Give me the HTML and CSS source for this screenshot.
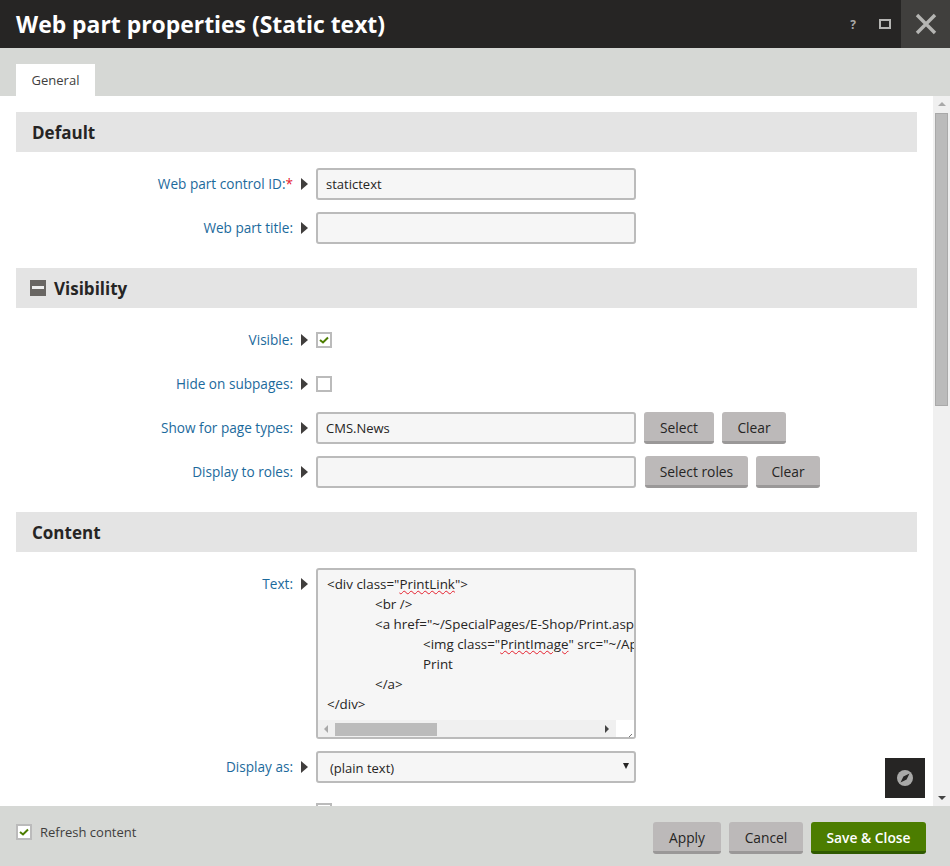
FILE: index.html
```html
<!DOCTYPE html>
<html lang="en">
<head>
    <meta charset="UTF-8">
    <meta name="viewport" content="width=device-width, initial-scale=1.0">
    <title>Web part properties (Static text)</title>
    <link rel="stylesheet" href="styles.css">
</head>
<body>
    <header class="titlebar">
        <h1>Web part properties (Static text)</h1>
        <div class="title-actions">
            <span class="help">?</span>
            <span class="maximize"></span>
            <span class="close">
                <svg width="22" height="22" viewBox="0 0 22 22"><path d="M2 2L20 20M20 2L2 20" stroke="#b5b5b3" stroke-width="3.4" fill="none"/></svg>
            </span>
        </div>
    </header>

    <nav class="tabs">
        <a class="tab">General</a>
    </nav>

    <main class="content">
        <div class="form">
            <section>
                <h2 class="section-head">Default</h2>
                <div class="row">
                    <label>Web part control ID:<span class="req">*</span></label>
                    <span class="arrow"></span>
                    <div class="input">statictext</div>
                </div>
                <div class="row">
                    <label>Web part title:</label>
                    <span class="arrow"></span>
                    <div class="input"></div>
                </div>
            </section>

            <section>
                <h2 class="section-head">
                    <span class="collapse"></span>
                    Visibility
                </h2>
                <div class="row">
                    <label>Visible:</label>
                    <span class="arrow"></span>
                    <span class="check checked">
                        <svg width="12" height="12" viewBox="0 0 12 12"><path d="M2 6L5 8.5L10 3.5" stroke="#4c7d00" stroke-width="2" fill="none"/></svg>
                    </span>
                </div>
                <div class="row">
                    <label>Hide on subpages:</label>
                    <span class="arrow"></span>
                    <span class="check"></span>
                </div>
                <div class="row">
                    <label>Show for page types:</label>
                    <span class="arrow"></span>
                    <div class="input">CMS.News</div>
                    <button class="btn btn-select">Select</button>
                    <button class="btn btn-clear">Clear</button>
                </div>
                <div class="row">
                    <label>Display to roles:</label>
                    <span class="arrow"></span>
                    <div class="input">&nbsp;</div>
                    <button class="btn btn-roles">Select roles</button>
                    <button class="btn btn-clear">Clear</button>
                </div>
            </section>

            <section>
                <h2 class="section-head">Content</h2>
                <div class="row row-text">
                    <label>Text:</label>
                    <span class="arrow"></span>
                    <div class="editor">
                        <pre class="code">&lt;div class="<span class="typo">PrintLink</span>"&gt;
	&lt;br /&gt;
	&lt;a href="~/SpecialPages/E-Shop/Print.aspx"&gt;
		&lt;img class="<span class="typo">PrintImage</span>" src="~/App_Themes/Print.png" /&gt;
		Print
	&lt;/a&gt;
&lt;/div&gt;</pre>
                        <div class="hscroll">
                            <span class="tri-left"></span>
                            <span class="hthumb"></span>
                            <span class="tri-right"></span>
                            <span class="resizer">
                                <svg width="10" height="10" viewBox="0 0 10 10"><path d="M3 9L9 3M7 9L9 7" stroke="#777" stroke-width="1" fill="none"/></svg>
                            </span>
                        </div>
                    </div>
                </div>
                <div class="row">
                    <label>Display as:</label>
                    <span class="arrow"></span>
                    <div class="input select">(plain text)<span class="caret"></span></div>
                </div>
                <div class="row">
                    <label></label>
                    <span class="arrow arrow-hidden"></span>
                    <span class="check"></span>
                </div>
            </section>
        </div>

        <div class="vscroll">
            <span class="tri-up"></span>
            <span class="vthumb"></span>
            <span class="tri-down"></span>
        </div>

        <a class="compass">
            <svg width="16" height="16" viewBox="0 0 16 16"><circle cx="8" cy="8" r="8" fill="#a9a9a8"/><path d="M12.5 3.5L9.6 9.6L3.5 12.5L6.4 6.4Z" fill="#262524"/></svg>
        </a>
    </main>

    <footer class="actions">
        <div class="refresh">
            <span class="check checked">
                <svg width="12" height="12" viewBox="0 0 12 12"><path d="M2 6L5 8.5L10 3.5" stroke="#4c7d00" stroke-width="2" fill="none"/></svg>
            </span>
            Refresh content
        </div>
        <div class="action-btns">
            <button class="btn btn-apply">Apply</button>
            <button class="btn btn-cancel">Cancel</button>
            <button class="btn btn-save">Save &amp; Close</button>
        </div>
    </footer>
</body>
</html>
```

FILE: styles.css
```css
/* page */
* {
    box-sizing: border-box;
}

html, body {
    height: 100%;
}

body {
    margin: 0;
    height: 866px;
    display: flex;
    flex-direction: column;
    overflow: hidden;
    font-family: "Open Sans", "Noto Sans", sans-serif;
    font-size: 13px;
    color: #262524;
    background: #fff;
}

/* title bar */
.titlebar {
    height: 48px;
    flex: none;
    display: flex;
    align-items: center;
    justify-content: space-between;
    padding-left: 16px;
    background: #262524;
}

.titlebar h1 {
    margin: 0;
    font-size: 22.9px;
    font-weight: 700;
    color: #fff;
}

.title-actions {
    display: flex;
    align-items: center;
    height: 48px;
}

.help {
    width: 12px;
    margin-right: 20px;
    font-size: 12px;
    font-weight: 700;
    text-align: center;
    color: #a9a9a8;
}

.maximize {
    width: 12px;
    height: 10px;
    margin-right: 10px;
    border: 2px solid #b5b5b3;
}

.close {
    width: 49px;
    height: 48px;
    display: flex;
    align-items: center;
    justify-content: center;
    background: #403f3d;
}

/* tabs */
.tabs {
    height: 48px;
    flex: none;
    display: flex;
    align-items: flex-end;
    padding-left: 16px;
    background: #d6d8d5;
}

.tab {
    width: 79px;
    height: 32px;
    line-height: 33px;
    text-align: center;
    color: #403e3d;
    background: #fff;
}

/* scrolling part */
.content {
    position: relative;
    flex: 1;
    min-height: 0;
    overflow: hidden;
}

.form {
    width: 917px;
    padding: 16px 0 0 16px;
}

section {
    padding-bottom: 12px;
}

.section-head {
    height: 40px;
    margin: 0 0 16px;
    padding-left: 16px;
    display: flex;
    align-items: center;
    font-size: 17px;
    font-weight: 700;
    background: #e4e4e4;
}

.collapse {
    position: relative;
    width: 16px;
    height: 16px;
    margin: 0 8px 0 -2px;
    background: #696663;
}

.collapse::after {
    content: "";
    position: absolute;
    left: 2px;
    top: 6px;
    width: 12px;
    height: 3px;
    background: #eee;
}

.row {
    min-height: 32px;
    margin-bottom: 12px;
    display: flex;
    align-items: center;
}

.row label {
    width: 277px;
    padding-bottom: 2px;
    font-size: 13.6px;
    text-align: right;
    color: #1c6a9c;
}

.req {
    color: #e5202e;
}

.arrow {
    width: 0;
    height: 0;
    margin: 0 8px 0 8px;
    border-left: 7px solid #403e3d;
    border-top: 6px solid transparent;
    border-bottom: 6px solid transparent;
}

.arrow-hidden {
    visibility: hidden;
}

.input {
    width: 320px;
    height: 32px;
    padding: 0 8px;
    line-height: 28px;
    background: #f6f6f6;
    border: 2px solid #bbb;
    border-radius: 3px;
}

.select {
    position: relative;
    height: 32px;
    padding-left: 12px;
    line-height: 30px;
}

.caret {
    position: absolute;
    right: 5px;
    top: 10px;
    border-top: 6px solid #262524;
    border-left: 3px solid transparent;
    border-right: 3px solid transparent;
}

.check {
    width: 16px;
    height: 16px;
    display: flex;
    align-items: center;
    justify-content: center;
    background: #fff;
    border: 2px solid #bbb;
}

/* buttons */
.btn {
    height: 32px;
    margin-left: 8px;
    padding: 2px 0 0;
    font: inherit;
    font-size: 13.8px;
    color: #262524;
    background: #bcb9b9;
    border: 0;
    border-bottom: 3px solid #9a9898;
    border-radius: 3px;
}

.btn-select {
    width: 70px;
}

.btn-clear {
    width: 64px;
}

.btn-roles {
    width: 103px;
    margin-left: 9px;
}

.btn-apply {
    width: 68px;
}

.btn-cancel {
    width: 74px;
}

.btn-save {
    width: 115px;
    color: #fff;
    font-weight: 600;
    background: #4c7d00;
    border-bottom-color: #2f5a00;
}

/* text editor */
.row-text {
    align-items: flex-start;
}

.row-text label {
    line-height: 32px;
}

.row-text .arrow {
    margin-top: 10px;
}

.editor {
    width: 320px;
    height: 171px;
    position: relative;
    overflow: hidden;
    background: #f6f6f6;
    border: 2px solid #bbb;
    border-radius: 3px;
}

.code {
    margin: 0;
    padding: 4px 0 0 9px;
    height: 150px;
    overflow: hidden;
    font: inherit;
    font-size: 13.4px;
    line-height: 20px;
    tab-size: 48px;
}

.typo {
    text-decoration: underline wavy #e5202e 1px;
}

.hscroll {
    height: 18px;
    display: flex;
    align-items: center;
    background: #f0f0f0;
}

.tri-left {
    margin: 0 6px;
    border-right: 4px solid #a9a9a9;
    border-top: 4px solid transparent;
    border-bottom: 4px solid transparent;
}

.hthumb {
    width: 103px;
    height: 13px;
    margin-left: 1px;
    background: #bbb;
}

.tri-right {
    margin-left: 168px;
    border-left: 4px solid #444;
    border-top: 4px solid transparent;
    border-bottom: 4px solid transparent;
}

.resizer {
    width: 18px;
    height: 18px;
    margin-left: 7px;
    padding: 7px 0 0 7px;
    background: #fff;
}

/* page scrollbar */
.vscroll {
    position: absolute;
    right: 0;
    top: 0;
    bottom: 0;
    width: 17px;
    background: #f0f0f0;
}

.vthumb {
    position: absolute;
    left: 2px;
    top: 17px;
    width: 13px;
    height: 293px;
    background: #bbb;
    border: 1px solid #a9a9a9;
}

.tri-up, .tri-down {
    position: absolute;
    left: 5px;
    border-left: 4px solid transparent;
    border-right: 4px solid transparent;
}

.tri-up {
    top: 6px;
    border-bottom: 4px solid #a9a9a9;
}

.tri-down {
    bottom: 6px;
    border-top: 4px solid #444;
}

.compass {
    position: absolute;
    left: 885px;
    top: 662px;
    width: 40px;
    height: 40px;
    display: flex;
    align-items: center;
    justify-content: center;
    background: #262524;
}

/* footer */
.actions {
    height: 60px;
    flex: none;
    display: flex;
    align-items: center;
    justify-content: space-between;
    padding: 0 24px 0 16px;
    background: #d6d8d5;
}

.refresh {
    display: flex;
    align-items: center;
    gap: 8px;
    margin-bottom: 8px;
    color: #403e3d;
}

.action-btns {
    display: flex;
    margin-top: 4px;
}
```
